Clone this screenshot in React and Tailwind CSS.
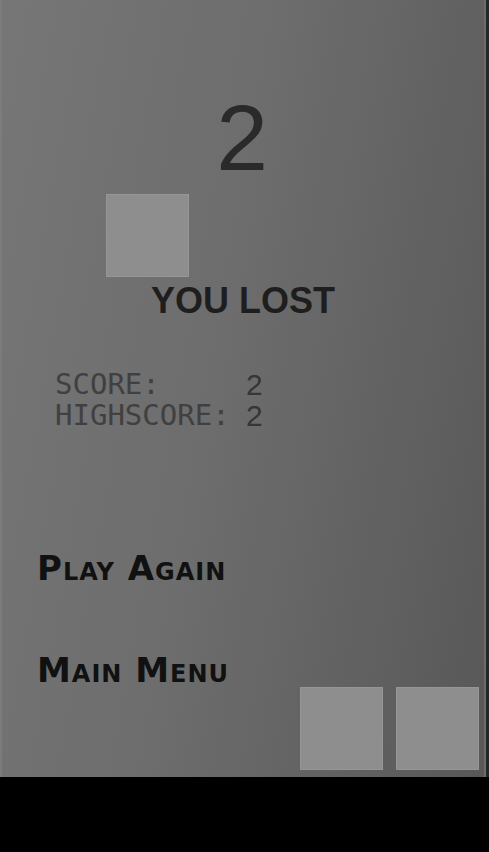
export default function App() {
  return (
    <div className="w-[489px] h-[852px] bg-black flex flex-col">
      <div className="h-[777px] flex">
        <div className="w-[2px] bg-[#7c7c7c]" />
        <div className="flex-1 flex flex-col bg-[linear-gradient(100deg,#767676_0%,#6d6d6d_45%,#585858_100%)]">
          <div
            className="mt-[92px] h-[93px] text-center text-[93px] leading-[93px] text-[#2a2a2a] pr-[2px]"
            style={{ fontFamily: '"Liberation Sans", Arial, sans-serif' }}
          >
            2
          </div>
          <div className="mt-[9px] ml-[104px] w-[83px] h-[83px] bg-[#8e8e8e] border border-[#969696]" />
          <div
            className="mt-[6px] h-[36px] text-center text-[36px] leading-[36px] font-bold text-[#1e1e1e]"
            style={{ fontFamily: '"Liberation Sans", Arial, sans-serif' }}
          >
            YOU LOST
          </div>
          <div className="mt-[50px] ml-[53px] grid grid-cols-[191px_auto] text-[#404040]">
            <div
              className="text-[29px] leading-[31px] h-[31px]"
              style={{ fontFamily: '"DejaVu Sans Mono", monospace' }}
            >
              SCORE:
            </div>
            <div
              className="text-[30px] leading-[31px] h-[31px] text-[#363636]"
              style={{ fontFamily: '"Liberation Sans", Arial, sans-serif' }}
            >
              2
            </div>
            <div
              className="text-[29px] leading-[31px] h-[31px]"
              style={{ fontFamily: '"DejaVu Sans Mono", monospace' }}
            >
              HIGHSCORE:
            </div>
            <div
              className="text-[30px] leading-[31px] h-[31px] text-[#363636]"
              style={{ fontFamily: '"Liberation Sans", Arial, sans-serif' }}
            >
              2
            </div>
          </div>
          <div
            className="mt-[120px] ml-[35px] h-[34px] text-[34px] leading-[34px] font-bold tracking-[1px] text-[#111] [font-variant:small-caps]"
            style={{ fontFamily: '"DejaVu Sans", sans-serif' }}
          >
            Play Again
          </div>
          <div
            className="mt-[68px] ml-[35px] h-[34px] text-[34px] leading-[34px] font-bold tracking-[1px] text-[#111] [font-variant:small-caps]"
            style={{ fontFamily: '"DejaVu Sans", sans-serif' }}
          >
            Main Menu
          </div>
          <div className="flex justify-end gap-[13px] pr-[5px]">
            <div className="w-[83px] h-[83px] bg-[#8e8e8e] border border-[#969696]" />
            <div className="w-[83px] h-[83px] bg-[#8e8e8e] border border-[#969696]" />
          </div>
        </div>
        <div className="w-[2px] bg-[#6c6c6c]" />
        <div className="w-[3px] bg-[#262626]" />
      </div>
    </div>
  );
}
